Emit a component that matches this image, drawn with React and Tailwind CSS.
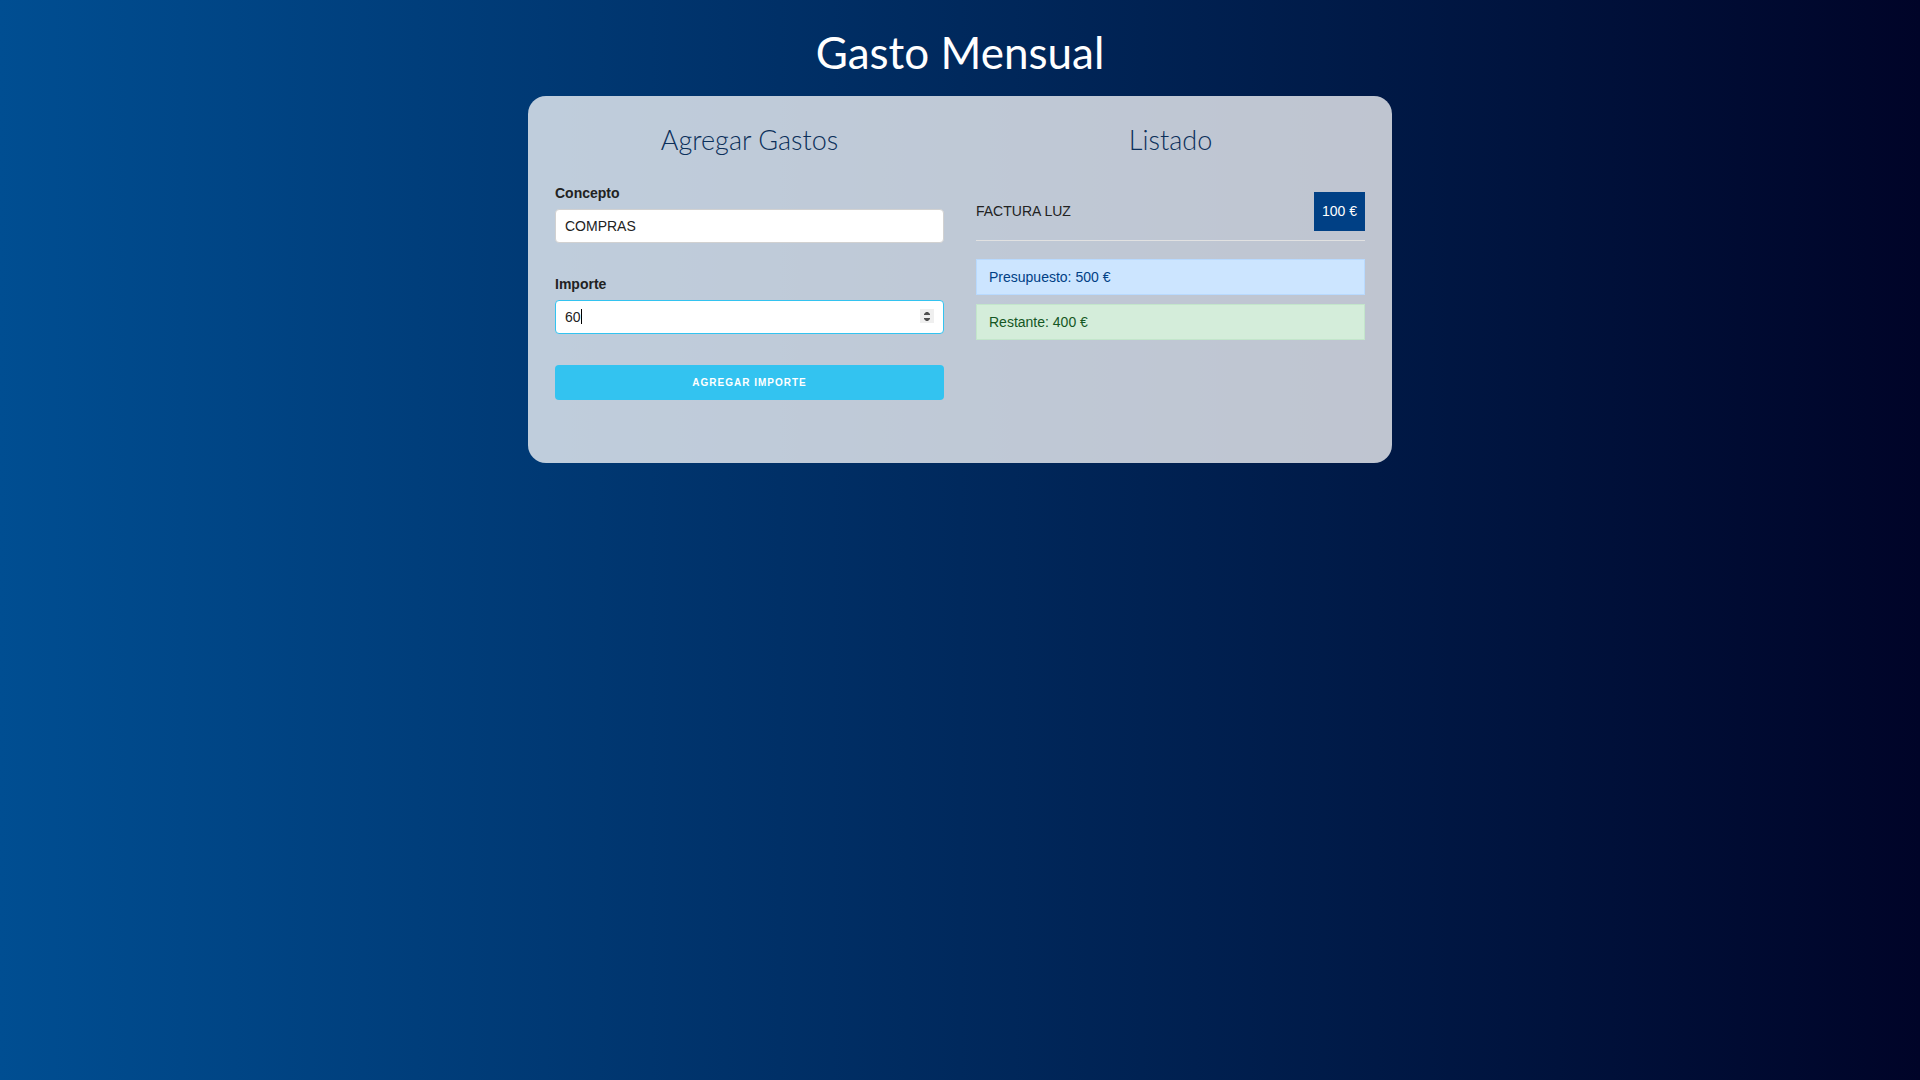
import { useState } from "react";

const inputClass =
  "block h-[34px] w-full rounded-[4px] border border-[#d1d1d1] bg-white px-[9px] pb-px text-[#222] outline-none focus:border-[#33c3f0]";

function Column({ title, children }) {
  return (
    <section className="flex min-w-0 flex-1 flex-col">
      <h2 className="mb-[25px] text-center font-[Lato,sans-serif] text-[27px] leading-9 font-light text-[#0b2f5a]">
        {title}
      </h2>
      {children}
    </section>
  );
}

function Arrow({ d }) {
  return (
    <svg viewBox="0 0 14 7" className="block h-[7px] w-[14px]" aria-hidden="true">
      <path d={d} fill="#505050" />
    </svg>
  );
}

function AmountInput({ value, onChange }) {
  const [focused, setFocused] = useState(true);
  const step = (by) => onChange(String(Number(value) + by));
  return (
    <div className="relative">
      <input
        id="importe"
        type="number"
        autoFocus
        className={`${inputClass} caret-transparent [appearance:textfield] [&::-webkit-inner-spin-button]:appearance-none`}
        value={value}
        onFocus={() => setFocused(true)}
        onBlur={() => setFocused(false)}
        onChange={(e) => onChange(e.target.value)}
      />
      {focused && (
        <span
          aria-hidden="true"
          className="absolute top-[9px] h-[15px] w-px bg-black"
          style={{ left: `calc(10px + ${value.length}ch)` }}
        />
      )}
      <div className="absolute top-[9px] right-[10px] flex flex-col bg-[#efefef]">
        <button type="button" aria-label="Aumentar" onClick={() => step(1)}>
          <Arrow d="M4 6V5L6 3H8L10 5V6Z" />
        </button>
        <button type="button" aria-label="Disminuir" onClick={() => step(-1)}>
          <Arrow d="M4 2V3L6 5H8L10 3V2Z" />
        </button>
      </div>
    </div>
  );
}

function ExpenseForm() {
  const [concept, setConcept] = useState("COMPRAS");
  const [amount, setAmount] = useState("60");
  return (
    <form className="flex flex-col" onSubmit={(e) => e.preventDefault()}>
      <label htmlFor="concepto" className="mb-1.5 leading-5 font-bold">
        Concepto
      </label>
      <input
        id="concepto"
        type="text"
        className={inputClass}
        value={concept}
        onChange={(e) => setConcept(e.target.value)}
      />
      <label htmlFor="importe" className="mt-[31px] mb-1.5 leading-5 font-bold">
        Importe
      </label>
      <AmountInput value={amount} onChange={setAmount} />
      <button
        type="submit"
        className="mt-[31px] h-[35px] rounded-[4px] bg-[#33c3f0] text-[10px] font-semibold tracking-[1px] text-white uppercase"
      >
        Agregar Importe
      </button>
    </form>
  );
}

export default function App() {
  return (
    <main className="min-h-screen bg-linear-to-r/srgb from-[#004e92] to-[#000428] pt-[26px] font-['Liberation_Sans',Arial,sans-serif] text-[14px] text-[#222]">
      <h1 className="mb-[18px] text-center font-[Lato,sans-serif] text-[44px] leading-[52px] text-white">
        Gasto Mensual
      </h1>
      <div className="mx-auto flex w-[90%] max-w-[864px] gap-8 rounded-[18px] bg-white/75 px-[27px] pt-[26px] pb-[63px]">
        <Column title="Agregar Gastos">
          <ExpenseForm />
        </Column>
        <Column title="Listado">
          <ul className="mt-[9px] mb-[18px]">
            <li className="flex items-center justify-between border-b border-[#e1e1e1] pb-[9px]">
              <p>FACTURA LUZ</p>
              <span className="bg-[#004085] px-2 py-[9px] leading-[21px] text-white">100 €</span>
            </li>
          </ul>
          <div className="mb-[9px] border border-[#b8daff] bg-[#cce5ff] px-3 py-[7px] leading-5 text-[#004085]">
            Presupuesto: 500 €
          </div>
          <div className="border border-[#c3e6cb] bg-[#d4edda] px-3 py-[7px] leading-5 text-[#155724]">
            Restante: 400 €
          </div>
        </Column>
      </div>
    </main>
  );
}
